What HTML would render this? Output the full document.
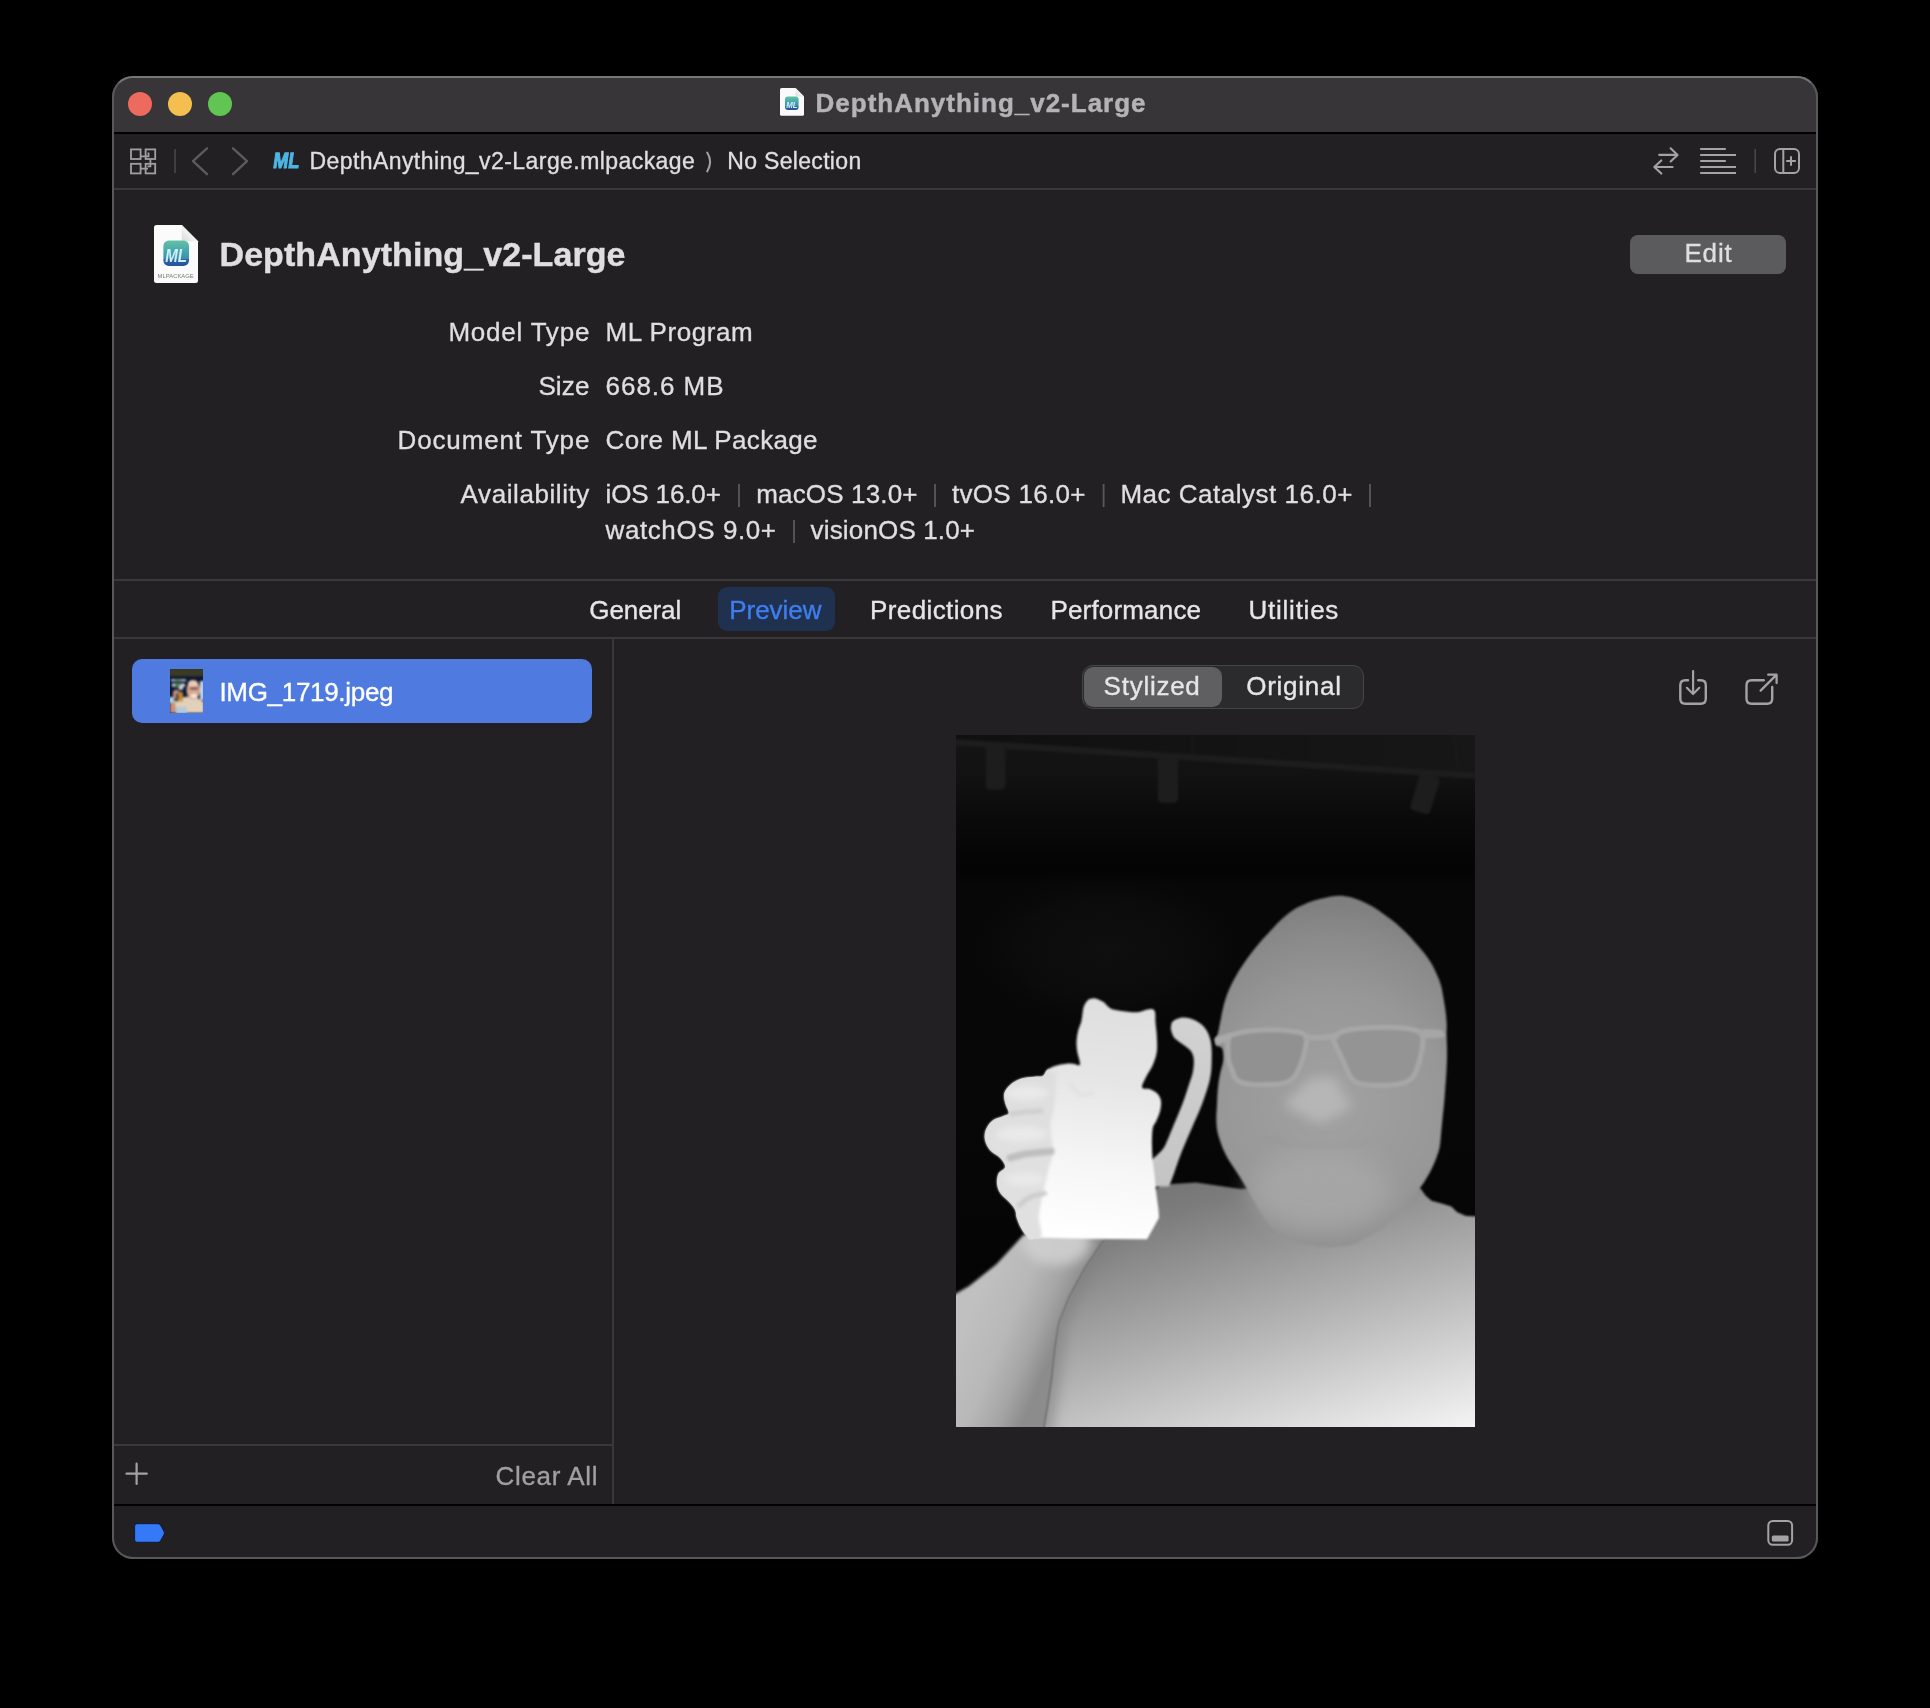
<!DOCTYPE html>
<html lang="en">
<head>
<meta charset="utf-8">
<title>DepthAnything_v2-Large</title>
<style>
*{box-sizing:border-box;margin:0;padding:0}
html,body{width:1930px;height:1708px;background:#000;overflow:hidden}
body{font-family:"Liberation Sans",sans-serif;color:#dfdee0;position:relative}
.a{position:absolute}
.t{position:absolute;white-space:nowrap;line-height:1}
#win{position:absolute;left:112px;top:76px;width:1706px;height:1483px;border-radius:21px;background:#222023;overflow:hidden}
#pg{position:absolute;left:-112px;top:-76px;width:1930px;height:1708px;will-change:transform}
#winborder{position:absolute;left:112px;top:76px;width:1706px;height:1483px;border-radius:21px;border:2px solid #59585b;border-top-color:#767578}
.hl{position:absolute;height:2px;background:#39383b}
.vl{position:absolute;width:2px;background:#39383b}
.dot{position:absolute;width:24px;height:24px;border-radius:50%;top:92px}
svg{position:absolute;overflow:visible}
</style>
</head>
<body>
<div id="win"><div id="pg">
  <!-- title bar -->
  <div class="a" style="left:112px;top:76px;width:1706px;height:56px;background:#373538"></div>
  <div class="a" style="left:112px;top:132px;width:1706px;height:2px;background:#000"></div>
  <div class="dot" style="left:128px;background:#ec6a5e"></div>
  <div class="dot" style="left:168px;background:#f4bf4f"></div>
  <div class="dot" style="left:208px;background:#61c554"></div>
  <!-- toolbar divider -->
  <div class="hl" style="left:112px;top:188px;width:1706px"></div>
  <!-- header / tabs dividers -->
  <div class="hl" style="left:112px;top:579px;width:1706px"></div>
  <div class="hl" style="left:112px;top:637px;width:1706px"></div>
  <!-- sidebar dividers -->
  <div class="vl" style="left:611.5px;top:639px;height:866px"></div>
  <div class="hl" style="left:112px;top:1444px;width:500px"></div>
  <!-- bottom bar -->
  <div class="a" style="left:112px;top:1504px;width:1706px;height:2px;background:#000"></div>
  <!-- Edit button -->
  <div class="a" style="left:1630px;top:234.5px;width:156px;height:39.5px;border-radius:8px;background:#5b5a5d"></div>
  <!-- selected tab pill -->
  <div class="a" style="left:718px;top:587px;width:117px;height:44px;border-radius:9px;background:#1f314f"></div>
  <!-- segmented control -->
  <div class="a" style="left:1082px;top:665px;width:282px;height:44px;border-radius:11px;background:#2b2a2d;border:1px solid #454447"></div>
  <div class="a" style="left:1083.7px;top:666.6px;width:138.3px;height:40.6px;border-radius:9.5px;background:#5f5e61"></div>
  <!-- sidebar selected row -->
  <div class="a" style="left:132px;top:659px;width:460px;height:64px;border-radius:10px;background:#4f7be0"></div>
  <!-- bottom bar items -->
<svg class="a" style="left:170px;top:669px" width="33" height="44" viewBox="0 0 33 44">
<defs><filter color-interpolation-filters="sRGB" id="tb" x="-20%" y="-20%" width="140%" height="140%"><feGaussianBlur stdDeviation="0.9"/></filter>
<clipPath id="tc"><rect x="0" y="0" width="33" height="44"/></clipPath></defs>
<g clip-path="url(#tc)">
<rect width="33" height="44" fill="#0b1730"/>
<g filter="url(#tb)">
<rect x="-1" y="-1" width="35" height="8.4" fill="#3b3a24"/>
<rect x="1" y="10.5" width="15" height="1.6" fill="#e8eef4"/>
<rect x="2" y="14.5" width="13" height="3.2" fill="#c9d3d6"/>
<rect x="5" y="11" width="6" height="9" fill="#2f5a36" opacity="0.7"/>
<rect x="30" y="12" width="4" height="19" fill="#c4d9f2"/>
<rect x="-1" y="28" width="5" height="6" fill="#a5d6e6"/>
<path d="M0 44V36Q4 31 9 30L14 28Q20 27 26 28L34 33V44Z" fill="#e3d0ba"/>
<path d="M0 44V35Q2 33 5 33L6 44Z" fill="#c98f7a"/>
<rect x="6" y="38" width="11" height="7" fill="#b4c9d6"/>
<ellipse cx="23.3" cy="21" rx="6.8" ry="9.6" fill="#d9a88f"/>
<ellipse cx="23" cy="14.5" rx="5" ry="3.5" fill="#ecc9b4"/>
<ellipse cx="24" cy="27" rx="3.5" ry="2.2" fill="#f3e4dc"/>
<ellipse cx="24" cy="19.5" rx="4.5" ry="1.2" fill="#7a5346"/>
<ellipse cx="11" cy="18.5" rx="2.3" ry="2.6" fill="#cfd0d6"/>
<rect x="3" y="21" width="6.5" height="9" rx="2.5" fill="#c98d7b"/>
<rect x="9.4" y="23" width="3.4" height="9.5" fill="#c98f2e"/>
<rect x="6.2" y="24.5" width="2" height="8" fill="#3c3a22"/>
</g>
</g>
</svg>

<svg class="a" style="left:956px;top:735px" width="519" height="692" viewBox="0 0 519 692">
<defs>
<clipPath id="dc"><rect x="0" y="0" width="519" height="692"/></clipPath>
<filter color-interpolation-filters="sRGB" id="b1" x="-5%" y="-5%" width="110%" height="110%"><feGaussianBlur stdDeviation="0.8"/></filter>
<filter color-interpolation-filters="sRGB" id="b2" x="-20%" y="-20%" width="140%" height="140%"><feGaussianBlur stdDeviation="1.6"/></filter>
<filter color-interpolation-filters="sRGB" id="b3" x="-20%" y="-20%" width="140%" height="140%"><feGaussianBlur stdDeviation="3"/></filter>
<filter color-interpolation-filters="sRGB" id="b6" x="-30%" y="-30%" width="160%" height="160%"><feGaussianBlur stdDeviation="6"/></filter>
<filter color-interpolation-filters="sRGB" id="b12" x="-40%" y="-40%" width="180%" height="180%"><feGaussianBlur stdDeviation="12"/></filter>
<linearGradient id="gbg" x1="0" y1="0" x2="0" y2="692" gradientUnits="userSpaceOnUse">
 <stop offset="0" stop-color="#151515"/><stop offset="0.06" stop-color="#121212"/><stop offset="0.11" stop-color="#0b0b0b"/><stop offset="0.18" stop-color="#050505"/><stop offset="0.195" stop-color="#040404"/><stop offset="0.22" stop-color="#070707"/><stop offset="0.5" stop-color="#070707"/><stop offset="1" stop-color="#030303"/></linearGradient>
<linearGradient id="gshirt" x1="200" y1="440" x2="297.6" y2="765.7" gradientUnits="userSpaceOnUse">
 <stop offset="0" stop-color="#747474"/><stop offset="0.12" stop-color="#7c7c7c"/><stop offset="0.5" stop-color="#b0b0b0"/><stop offset="1" stop-color="#f7f7f7"/></linearGradient>
<radialGradient id="ghead" cx="375" cy="370" r="200" gradientUnits="userSpaceOnUse">
 <stop offset="0" stop-color="#a2a2a2"/><stop offset="0.55" stop-color="#989898"/><stop offset="0.85" stop-color="#8a8a8a"/><stop offset="1" stop-color="#808080"/></radialGradient>
<linearGradient id="garm" x1="20" y1="560" x2="105" y2="596" gradientUnits="userSpaceOnUse">
 <stop offset="0" stop-color="#c0c0c0"/><stop offset="0.45" stop-color="#b8b8b8"/><stop offset="0.75" stop-color="#a6a6a6"/><stop offset="1" stop-color="#8c8c8c"/></linearGradient>
<linearGradient id="gcat" x1="170" y1="262" x2="140" y2="505" gradientUnits="userSpaceOnUse">
 <stop offset="0" stop-color="#dedede"/><stop offset="0.35" stop-color="#e6e6e6"/><stop offset="0.7" stop-color="#f6f6f6"/><stop offset="1" stop-color="#ffffff"/></linearGradient>
<radialGradient id="gshelf" cx="0.5" cy="0.5" r="0.5"><stop offset="0" stop-color="#0f0f0f"/><stop offset="0.6" stop-color="#0c0c0c" stop-opacity="0.8"/><stop offset="1" stop-color="#080808" stop-opacity="0"/></radialGradient>
<linearGradient id="ghand" x1="20" y1="0" x2="125" y2="0" gradientUnits="userSpaceOnUse"><stop offset="0" stop-color="#d6d6d6" stop-opacity="0.95"/><stop offset="0.45" stop-color="#dcdcdc" stop-opacity="0.7"/><stop offset="1" stop-color="#f0f0f0" stop-opacity="0"/></linearGradient>
<linearGradient id="gtop" x1="0" y1="0" x2="519" y2="0" gradientUnits="userSpaceOnUse"><stop offset="0" stop-color="#101010"/><stop offset="1" stop-color="#171717"/></linearGradient>
<linearGradient id="gtail" x1="230" y1="285" x2="200" y2="450" gradientUnits="userSpaceOnUse">
 <stop offset="0" stop-color="#d2d2d2"/><stop offset="1" stop-color="#c4c4c4"/></linearGradient>
</defs>
<clipPath id="shirtclip"><path d="M205.0 449.7L240.0 447.5L284.5 454.0L296.0 453.0L320.0 480.0L420.0 480.0L455.0 449.0L464.6 453.6L469.5 460.5L475.5 465.8L486.6 468.8L495.3 471.6L501.3 477.2L510.0 481.0L530.0 482.0L530.0 705.0L85.8 705.0L91.6 669.3L95.6 642.4L98.3 615.4L102.4 588.5L113.0 561.5L129.3 532.0L145.5 507.7L170.0 480.0Z"/></clipPath>
<clipPath id="armclip"><path d="M67.4 500.0L40.4 529.2L13.5 550.8L-10.0 564.5L-10.0 705.0L86.8 705.0L92.6 669.3L96.6 642.4L99.3 615.4L103.4 588.5L114.0 561.5L130.3 532.0L146.5 507.7L160.0 495.0Z"/></clipPath>
<clipPath id="catclip"><path d="M132.8 264.3C133.9 264.2 136.9 262.9 139.3 263.4C141.8 263.8 145.1 265.5 147.5 267.1C150.0 268.8 151.4 271.8 154.1 273.2C156.8 274.6 159.6 275.0 163.9 275.7C168.3 276.3 176.0 277.4 180.3 277.3C184.7 277.2 187.4 275.4 190.2 274.8C192.9 274.3 195.2 273.7 196.7 274.2C198.2 274.7 198.7 275.5 199.2 277.8C199.6 280.0 199.2 283.8 199.5 287.6C199.8 291.4 200.6 295.8 200.8 300.7C201.0 305.7 201.5 312.2 200.8 317.1C200.1 322.0 198.5 326.1 196.7 330.2C194.9 334.3 191.9 338.0 190.2 341.7C188.4 345.4 185.5 350.3 186.1 352.4C186.6 354.4 191.0 353.1 193.4 354.0C195.9 355.0 198.9 356.2 200.8 358.1C202.7 360.0 204.4 362.5 204.9 365.5C205.5 368.5 204.9 372.7 204.1 376.1C203.3 379.6 201.6 383.1 200.3 386.0C199.1 388.9 197.5 389.5 196.7 393.4C196.0 397.2 195.9 403.6 195.9 408.9C195.9 414.3 196.3 419.9 196.7 425.3C197.2 430.8 198.1 436.3 198.7 441.7C199.3 447.2 199.7 452.7 200.3 458.1C201.0 463.6 202.0 470.4 202.5 474.5C202.9 478.6 202.9 481.3 203.0 482.7L191.0 504.3L131.1 503.7L80.3 502.4L73.8 504.0C73.0 503.2 70.5 501.3 68.9 499.1C67.2 496.9 65.3 493.6 63.9 490.9C62.6 488.2 61.5 485.4 60.7 482.7C59.8 480.0 60.4 477.2 59.0 474.5C57.7 471.8 54.9 469.0 52.5 466.3C50.0 463.6 46.2 461.1 44.3 458.1C42.3 455.1 41.3 451.6 41.0 448.3C40.7 445.0 41.3 441.2 42.6 438.4C44.0 435.7 48.9 434.5 49.2 431.9C49.5 429.3 46.7 425.6 44.3 422.9C41.8 420.1 36.9 418.4 34.4 415.5C31.9 412.6 30.0 408.9 29.2 405.7C28.4 402.4 28.4 399.1 29.5 395.8C30.7 392.5 33.1 388.4 36.1 386.0C39.1 383.5 44.8 382.4 47.5 381.1C50.3 379.8 52.5 380.3 52.8 378.1C53.1 375.9 49.9 371.3 49.2 368.0C48.4 364.6 47.5 361.1 48.4 358.1C49.2 355.1 51.2 352.4 54.1 349.9C57.0 347.5 61.5 344.7 65.6 343.4C69.7 342.0 75.1 342.1 78.7 341.7C82.2 341.3 84.7 342.1 86.9 340.9C89.1 339.7 89.3 336.1 91.8 334.3C94.3 332.6 97.8 331.2 101.6 330.2C105.5 329.3 111.2 328.6 114.8 328.6C118.3 328.6 121.4 330.5 123.0 330.2C124.5 330.0 124.0 329.2 123.8 327.0C123.5 324.8 121.9 320.4 121.3 317.1C120.8 313.9 120.4 310.8 120.5 307.3C120.6 303.7 121.3 299.4 122.1 295.8C123.0 292.3 124.5 290.1 125.4 286.0C126.4 281.9 126.6 274.8 127.9 271.2C129.1 267.6 132.0 265.5 132.8 264.3Z"/></clipPath>
<g clip-path="url(#dc)">
<rect x="0" y="0" width="519" height="692" fill="url(#gbg)"/>
<ellipse cx="150" cy="215" rx="150" ry="85" fill="url(#gshelf)"/>
<g filter="url(#b1)">
<path d="M-2 -2 L521 -2 L521 37.6 L-2 3.9Z" fill="url(#gtop)"/>
<path d="M-2 3.9 L521 37.6 L521 44.1 L-2 10.4Z" fill="#1d1d1d"/>
<path d="M237.5 -1 L236 19" stroke="#1c1c1c" stroke-width="1.2" fill="none"/>
<path d="M498.5 -1 L502.5 38" stroke="#1c1c1c" stroke-width="1.2" fill="none"/>
<rect x="29.7" y="10" width="19.8" height="44.8" rx="4.5" fill="#1d1d1d"/>
<rect x="201.7" y="22" width="20.5" height="45.7" rx="4.5" fill="#1d1d1d"/>
<rect x="458" y="39" width="21" height="39" rx="4.5" fill="#1d1d1d" transform="rotate(17 468 60)"/>
</g>
<g filter="url(#b1)">
<path d="M205.0 449.7L240.0 447.5L284.5 454.0L296.0 453.0L320.0 480.0L420.0 480.0L455.0 449.0L464.6 453.6L469.5 460.5L475.5 465.8L486.6 468.8L495.3 471.6L501.3 477.2L510.0 481.0L530.0 482.0L530.0 705.0L85.8 705.0L91.6 669.3L95.6 642.4L98.3 615.4L102.4 588.5L113.0 561.5L129.3 532.0L145.5 507.7L170.0 480.0Z" fill="url(#gshirt)"/>
<path d="M150.0 500.0C146.8 505.3 136.8 521.8 131.0 532.0C125.2 542.2 119.5 552.1 115.0 561.5C110.5 570.9 106.5 579.5 104.0 588.5C101.5 597.5 101.2 606.4 100.0 615.4C98.8 624.4 98.2 633.4 97.0 642.4C95.8 651.4 94.5 659.7 93.0 669.3C91.5 678.9 88.8 694.9 88.0 700.0" fill="none" stroke="#7e7e7e" stroke-width="16" filter="url(#b6)" opacity="0.55" clip-path="url(#shirtclip)"/>
</g>
<g filter="url(#b1)">
<path d="M382.9 160.7C386.8 160.6 390.0 161.2 393.8 162.1C397.5 163.0 401.5 164.4 405.4 166.0C409.3 167.7 413.1 169.5 417.0 171.8C420.9 174.1 424.7 177.0 428.6 179.8C432.5 182.6 436.6 185.5 440.2 188.5C443.8 191.5 447.2 194.8 450.4 198.0C453.5 201.1 456.2 204.1 459.1 207.4C462.0 210.6 465.1 214.2 467.8 217.5C470.4 220.9 472.8 224.1 475.0 227.7C477.2 231.3 479.1 235.4 480.8 239.3C482.5 243.2 484.1 247.0 485.2 250.9C486.3 254.8 486.6 258.4 487.4 262.5C488.1 266.6 489.0 271.2 489.5 275.6C490.1 279.9 490.5 284.8 490.7 288.6C490.9 292.5 490.5 294.9 490.5 298.8C490.6 302.6 490.9 307.5 491.0 311.8C491.1 316.2 491.1 320.4 491.0 325.0C490.9 329.6 490.5 334.7 490.3 339.5C490.0 344.3 489.6 349.2 489.2 354.0C488.9 358.9 488.5 363.7 488.1 368.5C487.6 373.4 487.1 378.2 486.6 383.0C486.1 387.9 485.7 392.7 485.2 397.5C484.7 402.4 484.6 407.7 483.7 412.0C482.9 416.4 481.5 419.8 480.1 423.7C478.6 427.5 476.8 431.6 475.0 435.3C473.2 438.9 471.0 442.5 469.2 445.4C467.4 448.3 466.1 450.0 464.1 452.7C462.2 455.3 460.2 458.2 457.6 461.4C455.1 464.5 451.8 468.1 448.9 471.5C446.0 474.9 443.6 478.3 440.2 481.7C436.8 485.1 432.5 488.9 428.6 491.8C424.7 494.7 420.6 497.0 417.0 499.1C413.4 501.1 410.4 502.4 406.8 504.2C403.3 506.0 402.2 508.4 395.7 509.8C389.2 511.2 376.4 512.5 368.0 512.3C359.6 512.1 350.9 509.9 345.0 508.5C339.1 507.1 336.8 506.0 332.8 504.2C328.9 502.4 324.6 500.2 321.2 497.6C317.9 495.1 315.2 492.1 312.5 488.9C309.9 485.8 307.5 482.2 305.3 478.8C303.1 475.4 301.4 472.0 299.5 468.6C297.5 465.2 295.4 461.4 293.7 458.5C292.0 455.6 290.8 453.6 289.3 451.2C287.9 448.8 286.8 446.9 285.0 444.0C283.2 441.1 280.6 437.2 278.4 433.8C276.3 430.4 273.9 427.0 271.9 423.7C270.0 420.3 268.3 416.9 266.8 413.5C265.4 410.1 264.2 406.5 263.2 403.3C262.2 400.2 261.5 398.0 261.0 394.6C260.6 391.3 260.3 387.4 260.3 383.0C260.3 378.7 260.8 373.4 261.0 368.5C261.3 363.7 261.3 358.9 261.8 354.0C262.2 349.2 263.0 344.3 263.9 339.5C264.9 334.7 266.9 329.4 267.3 325.0C267.6 320.6 267.3 315.7 266.1 313.3C265.0 310.9 261.4 311.8 260.3 310.4C259.2 308.9 259.3 306.5 259.6 304.6C259.8 302.6 261.0 301.4 261.8 298.8C262.5 296.1 263.2 292.3 263.9 288.6C264.7 285.0 265.3 280.9 266.1 277.0C267.0 273.1 267.8 269.3 269.0 265.4C270.2 261.5 271.7 257.7 273.4 253.8C275.1 249.9 277.0 246.1 279.2 242.2C281.3 238.3 283.8 234.6 286.4 230.6C289.1 226.6 292.2 222.1 295.1 218.3C298.0 214.4 300.9 210.8 303.8 207.4C306.7 204.0 309.6 201.1 312.5 198.0C315.4 194.8 318.3 191.4 321.2 188.5C324.1 185.6 327.0 183.0 329.9 180.5C332.8 178.1 335.7 175.8 338.7 174.0C341.6 172.2 344.0 171.1 347.4 169.7C350.7 168.2 355.1 166.5 359.0 165.3C362.8 164.1 366.6 163.2 370.6 162.4C374.6 161.6 379.0 160.7 382.9 160.7Z" fill="url(#ghead)"/>
</g>
<g>
<path d="M354.6 343.9C360.9 341.7 374.2 341.7 379.3 343.9C384.3 346.0 382.7 353.0 385.1 356.9C387.5 360.8 392.6 364.4 393.8 367.1C395.0 369.7 395.5 370.2 392.3 372.9C389.2 375.5 379.8 380.5 374.9 383.0C370.1 385.6 367.4 388.3 363.3 388.1C359.2 387.9 354.9 384.2 350.3 381.9C345.7 379.6 339.3 376.7 335.7 374.3C332.2 372.0 328.3 370.7 329.2 367.8C330.2 364.9 337.3 360.9 341.6 356.9C345.8 352.9 348.3 346.0 354.6 343.9Z" fill="#b6b6b6" filter="url(#b6)" opacity="1"/>
<ellipse cx="365" cy="455" rx="70" ry="40" fill="#a8a8a8" filter="url(#b12)" opacity="0.8"/>
<path d="M308.2 403.3C313.7 404.5 331.2 408.9 341.6 410.3C351.9 411.8 360.9 412.1 370.6 412.0C380.2 412.0 392.6 410.7 399.6 409.9C406.6 409.0 410.5 407.5 412.6 407.0" fill="none" stroke="#939393" stroke-width="4" filter="url(#b3)" opacity="0.4"/>
<g filter="url(#b1)">
<path d="M272.2 303.4C272.7 299.2 271.2 301.2 275.5 299.9C279.8 298.6 290.4 296.4 298.0 295.6C305.6 294.8 313.9 294.7 321.2 295.0C328.6 295.3 337.4 296.3 342.3 297.3C347.1 298.4 349.0 299.0 350.3 301.4C351.5 303.8 350.2 307.9 349.5 311.8C348.9 315.8 347.5 321.2 346.3 325.0C345.2 328.8 344.0 331.3 342.4 334.4C340.9 337.5 339.6 341.2 336.9 343.6C334.2 345.9 331.6 347.3 326.3 348.4C321.0 349.4 311.6 349.8 305.3 349.8C299.0 349.8 292.8 349.3 288.6 348.4C284.4 347.4 282.5 346.6 280.3 344.3C278.2 342.0 277.1 337.6 275.8 334.4C274.6 331.2 273.2 330.2 272.6 325.0C272.0 319.8 271.7 307.6 272.2 303.4Z" fill="#919191" stroke="#a7a7a7" stroke-width="5" stroke-linejoin="round"/>
<path d="M377.8 302.0C379.7 299.2 385.6 296.8 391.6 295.3C397.6 293.7 405.5 293.1 414.1 292.7C422.7 292.3 435.2 292.2 443.1 292.7C451.0 293.2 457.7 294.3 461.7 295.9C465.6 297.5 466.0 299.7 466.8 302.4C467.5 305.1 466.8 308.1 466.3 311.8C465.8 315.6 464.8 320.8 463.7 325.0C462.6 329.2 461.4 333.6 459.8 336.9C458.2 340.2 457.0 342.7 454.1 344.7C451.2 346.8 447.8 348.2 442.4 349.1C436.9 350.0 427.9 350.4 421.3 350.2C414.8 350.1 407.5 349.5 403.2 348.4C398.9 347.2 397.6 345.7 395.5 343.4C393.5 341.1 392.3 337.5 390.9 334.4C389.4 331.4 388.6 328.8 386.8 325.0C385.1 321.2 381.9 315.7 380.4 311.8C378.9 308.0 376.0 304.7 377.8 302.0Z" fill="#949494" stroke="#a7a7a7" stroke-width="5" stroke-linejoin="round"/>
<path d="M348.1 299.1C350.5 298.3 358.1 300.0 363.3 299.9C368.5 299.9 376.2 298.0 379.3 298.8C382.3 299.6 384.1 303.5 381.4 304.6C378.8 305.7 368.8 305.3 363.3 305.3C357.9 305.3 351.3 305.6 348.8 304.6C346.3 303.5 345.7 299.8 348.1 299.1Z" fill="#a6a6a6"/>
<path d="M259.6 302.4C262.0 301.0 271.6 298.4 274.1 298.8C276.6 299.1 276.9 302.8 274.8 304.6C272.8 306.4 264.3 309.2 261.8 309.7C259.2 310.1 259.9 308.7 259.6 307.5C259.2 306.3 257.2 303.9 259.6 302.4Z" fill="#a9a9a9"/>
<path d="M466.3 294.4C469.2 293.2 481.5 294.4 485.2 295.2C488.9 295.9 488.1 297.6 488.4 298.8C488.6 300.0 490.1 301.8 486.6 302.4C483.2 303.0 471.2 303.7 467.8 302.4C464.4 301.1 463.4 295.6 466.3 294.4Z" fill="#a6a6a6"/>
</g>
</g>
<g filter="url(#b2)">
<path d="M67.4 500.0L40.4 529.2L13.5 550.8L-10.0 564.5L-10.0 705.0L86.8 705.0L92.6 669.3L96.6 642.4L99.3 615.4L103.4 588.5L114.0 561.5L130.3 532.0L146.5 507.7L160.0 495.0Z" fill="url(#garm)"/>
<ellipse cx="100" cy="508" rx="34" ry="22" fill="#cfcfcf" filter="url(#b6)" opacity="0.9" clip-path="url(#armclip)"/>
</g>
<g filter="url(#b1)">
<path d="M214.8 294.2C215.0 293.0 214.8 288.7 216.4 286.8C218.0 284.9 221.6 283.3 224.6 282.7C227.6 282.2 231.1 282.6 234.4 283.5C237.7 284.5 241.5 286.4 244.3 288.4C247.0 290.5 249.0 292.7 250.8 295.8C252.6 299.0 254.1 302.7 254.9 307.3C255.7 311.9 255.9 317.7 255.7 323.7C255.6 329.7 255.7 335.7 254.1 343.4C252.5 351.0 248.9 361.4 245.9 369.6C242.9 377.8 239.3 384.9 236.1 392.5C232.8 400.2 229.2 407.8 226.2 415.5C223.2 423.1 220.2 432.4 218.0 438.4C215.8 444.5 213.9 449.4 213.1 451.6L183.6 451.9C183.6 450.2 182.8 445.3 183.6 441.7C184.4 438.1 186.1 433.5 188.5 430.2C191.0 427.0 195.6 424.7 198.4 422.4C201.1 420.1 203.0 418.6 204.9 416.3C206.8 414.1 207.7 413.4 209.8 408.9C212.0 404.4 215.3 395.8 218.0 389.3C220.8 382.7 223.8 376.1 226.2 369.6C228.7 363.0 231.0 355.4 232.8 349.9C234.6 344.5 236.1 341.2 236.9 336.8C237.7 332.4 238.1 327.2 237.7 323.7C237.3 320.1 236.3 318.0 234.4 315.5C232.5 313.0 229.0 311.1 226.2 308.9C223.5 306.7 219.9 304.8 218.0 302.4C216.1 299.9 215.3 295.5 214.8 294.2Z" fill="url(#gtail)"/>
</g>
<g filter="url(#b1)">
<path d="M132.8 264.3C133.9 264.2 136.9 262.9 139.3 263.4C141.8 263.8 145.1 265.5 147.5 267.1C150.0 268.8 151.4 271.8 154.1 273.2C156.8 274.6 159.6 275.0 163.9 275.7C168.3 276.3 176.0 277.4 180.3 277.3C184.7 277.2 187.4 275.4 190.2 274.8C192.9 274.3 195.2 273.7 196.7 274.2C198.2 274.7 198.7 275.5 199.2 277.8C199.6 280.0 199.2 283.8 199.5 287.6C199.8 291.4 200.6 295.8 200.8 300.7C201.0 305.7 201.5 312.2 200.8 317.1C200.1 322.0 198.5 326.1 196.7 330.2C194.9 334.3 191.9 338.0 190.2 341.7C188.4 345.4 185.5 350.3 186.1 352.4C186.6 354.4 191.0 353.1 193.4 354.0C195.9 355.0 198.9 356.2 200.8 358.1C202.7 360.0 204.4 362.5 204.9 365.5C205.5 368.5 204.9 372.7 204.1 376.1C203.3 379.6 201.6 383.1 200.3 386.0C199.1 388.9 197.5 389.5 196.7 393.4C196.0 397.2 195.9 403.6 195.9 408.9C195.9 414.3 196.3 419.9 196.7 425.3C197.2 430.8 198.1 436.3 198.7 441.7C199.3 447.2 199.7 452.7 200.3 458.1C201.0 463.6 202.0 470.4 202.5 474.5C202.9 478.6 202.9 481.3 203.0 482.7L191.0 504.3L131.1 503.7L80.3 502.4L73.8 504.0C73.0 503.2 70.5 501.3 68.9 499.1C67.2 496.9 65.3 493.6 63.9 490.9C62.6 488.2 61.5 485.4 60.7 482.7C59.8 480.0 60.4 477.2 59.0 474.5C57.7 471.8 54.9 469.0 52.5 466.3C50.0 463.6 46.2 461.1 44.3 458.1C42.3 455.1 41.3 451.6 41.0 448.3C40.7 445.0 41.3 441.2 42.6 438.4C44.0 435.7 48.9 434.5 49.2 431.9C49.5 429.3 46.7 425.6 44.3 422.9C41.8 420.1 36.9 418.4 34.4 415.5C31.9 412.6 30.0 408.9 29.2 405.7C28.4 402.4 28.4 399.1 29.5 395.8C30.7 392.5 33.1 388.4 36.1 386.0C39.1 383.5 44.8 382.4 47.5 381.1C50.3 379.8 52.5 380.3 52.8 378.1C53.1 375.9 49.9 371.3 49.2 368.0C48.4 364.6 47.5 361.1 48.4 358.1C49.2 355.1 51.2 352.4 54.1 349.9C57.0 347.5 61.5 344.7 65.6 343.4C69.7 342.0 75.1 342.1 78.7 341.7C82.2 341.3 84.7 342.1 86.9 340.9C89.1 339.7 89.3 336.1 91.8 334.3C94.3 332.6 97.8 331.2 101.6 330.2C105.5 329.3 111.2 328.6 114.8 328.6C118.3 328.6 121.4 330.5 123.0 330.2C124.5 330.0 124.0 329.2 123.8 327.0C123.5 324.8 121.9 320.4 121.3 317.1C120.8 313.9 120.4 310.8 120.5 307.3C120.6 303.7 121.3 299.4 122.1 295.8C123.0 292.3 124.5 290.1 125.4 286.0C126.4 281.9 126.6 274.8 127.9 271.2C129.1 267.6 132.0 265.5 132.8 264.3Z" fill="url(#gcat)"/>
</g>
<g clip-path="url(#catclip)">
<path d="M16.4 327.0C29.0 298.1 77.9 331.1 91.8 334.3C105.7 337.6 98.9 340.8 100.0 346.6C101.1 352.5 99.3 361.9 98.4 369.6C97.4 377.2 94.5 384.9 94.3 392.5C94.0 400.2 97.5 408.1 97.0 415.5C96.6 422.9 93.5 429.7 91.8 436.8C90.1 443.9 88.4 450.7 86.9 458.1C85.4 465.5 83.9 472.9 82.8 481.1C81.7 489.3 91.4 502.9 80.3 507.3C69.3 511.7 27.0 537.3 16.4 507.3C5.7 477.2 3.8 355.8 16.4 327.0Z" fill="#dedede" opacity="0.92" filter="url(#b2)"/>
<g filter="url(#b3)" opacity="0.8">
<ellipse cx="70.5" cy="358.1" rx="22" ry="7" fill="#ececec"/>
<ellipse cx="65.6" cy="399.1" rx="26" ry="8" fill="#ececec"/>
<ellipse cx="68.9" cy="444.2" rx="20" ry="7" fill="#ebebeb"/>
</g>
<g filter="url(#b2)">
<path d="M54.1 422.9C56.8 422.2 63.7 419.9 70.5 418.8C77.3 417.7 91.0 416.7 95.1 416.3" stroke="#bebebe" stroke-width="7" fill="none" stroke-linecap="round"/>
<path d="M54.9 379.1C57.2 378.7 63.8 377.5 68.9 377.0C73.9 376.5 82.5 376.3 85.2 376.1" stroke="#cfcfcf" stroke-width="5" fill="none" stroke-linecap="round"/>
<path d="M63.1 470.4C64.9 469.0 69.5 464.3 73.8 462.2C78.0 460.2 86.1 458.8 88.5 458.1" stroke="#cdcdcd" stroke-width="5" fill="none" stroke-linecap="round"/>
<path d="M114.8 349.9C116.4 351.6 121.0 358.4 124.6 359.8C128.1 361.1 134.2 358.4 136.1 358.1" stroke="#dcdcdc" stroke-width="3" fill="none" stroke-linecap="round" opacity="0.6"/>
</g>
</g>
</g></svg>
<svg class="a" style="left:0;top:0" width="1930" height="1708" viewBox="0 0 1930 1708" fill="none">
<defs>
<linearGradient id="mlsq" x1="0" y1="0" x2="0" y2="1">
 <stop offset="0" stop-color="#62c3a6"/><stop offset="0.45" stop-color="#46a3ab"/><stop offset="0.72" stop-color="#3a8fad"/><stop offset="0.74" stop-color="#2f66a4"/><stop offset="1" stop-color="#27509a"/></linearGradient>
<linearGradient id="fold" x1="0" y1="1" x2="1" y2="0">
 <stop offset="0" stop-color="#d9d9d9"/><stop offset="0.5" stop-color="#f4f4f4"/><stop offset="1" stop-color="#ffffff"/></linearGradient>
<filter color-interpolation-filters="sRGB" id="ib" x="-20%" y="-20%" width="140%" height="140%"><feGaussianBlur stdDeviation="0.5"/></filter>
</defs>

<!-- related-items grid icon -->
<g stroke="#a09fa2" stroke-width="1.8">
 <rect x="131" y="149.4" width="9.6" height="9.6"/>
 <rect x="145.6" y="149.4" width="9.6" height="9.6"/>
 <rect x="131" y="163.8" width="9.6" height="9.6"/>
 <rect x="145.6" y="163.8" width="9.6" height="9.6"/>
 <path d="M140.6 156.4H148.5V152.4M150.4 159V166.3H147.5M140.6 168.6H148"/>
</g>
<!-- separators -->
<path d="M175 149V173" stroke="#48474a" stroke-width="1.6"/>
<path d="M1755.2 149V173" stroke="#48474a" stroke-width="1.6"/>
<!-- back / forward chevrons -->
<path d="M207 148.3L193 161.2L207 174.2" stroke="#5b5a5d" stroke-width="2.4" stroke-linecap="round" stroke-linejoin="round"/>
<path d="M233 148.3L247 161.2L233 174.2" stroke="#5b5a5d" stroke-width="2.4" stroke-linecap="round" stroke-linejoin="round"/>
<!-- breadcrumb chevron -->
<path d="M707.2 152.5Q713 161.5 707.2 171.5" stroke="#a3a2a5" stroke-width="2" stroke-linecap="round"/>
<!-- swap arrows -->
<g stroke="#a3a2a5" stroke-width="2.1" stroke-linecap="round" stroke-linejoin="round">
 <path d="M1659.3 154.9H1677.4M1670.6 148.3L1677.6 154.9L1670.6 161.5"/>
 <path d="M1672.6 167H1654.5M1661.3 160.4L1654.3 167L1661.3 173.6"/>
</g>
<!-- text lines icon -->
<g stroke="#a3a2a5" stroke-width="2">
 <path d="M1700.2 149H1725.8M1700.2 155H1736M1700.2 161H1725.8M1700.2 167H1736M1700.2 173H1736"/>
</g>
<!-- add editor icon -->
<g stroke="#a3a2a5" stroke-width="2">
 <rect x="1775" y="149" width="24" height="24" rx="5"/>
 <path d="M1783.3 149V173M1786.2 161H1795.8M1791 156.2V165.8"/>
</g>
<!-- download icon -->
<g stroke="#a3a2a5" stroke-width="2.4" stroke-linecap="round" stroke-linejoin="round">
 <path d="M1688 680.2H1685.3Q1680.3 680.2 1680.3 685.2V698.7Q1680.3 703.7 1685.3 703.7H1700.8Q1705.8 703.7 1705.8 698.7V685.2Q1705.8 680.2 1700.8 680.2H1698.2"/>
 <path d="M1693.1 671V693.6M1686.9 687.8L1693.1 694L1699.3 687.8" stroke-width="2.2"/>
</g>
<!-- external / open icon -->
<g stroke="#a3a2a5" stroke-width="2.4" stroke-linecap="round" stroke-linejoin="round">
 <path d="M1763.8 680.2H1751.5Q1746.5 680.2 1746.5 685.2V698.7Q1746.5 703.7 1751.5 703.7H1767.2Q1772.2 703.7 1772.2 698.7V687"/>
 <path d="M1760.6 690.6L1776.4 674.9M1768.2 674.7H1776.6V683.1" stroke-width="2.3"/>
</g>
<!-- plus -->
<path d="M126.5 1473.7H146.8M136.6 1463.6V1483.9" stroke="#a3a2a5" stroke-width="2.2" stroke-linecap="round"/>
<!-- debug area toggle -->
<rect x="1768.3" y="1521" width="23.8" height="23.8" rx="4.5" stroke="#a3a2a5" stroke-width="2"/>
<rect x="1771.8" y="1535.6" width="16.8" height="5.8" rx="1.5" fill="#a3a2a5"/>
<!-- breakpoint tag -->
<path d="M137 1523.7H157.8Q159.6 1523.7 160.6 1525.2L164 1531.4Q164.9 1533 164 1534.6L160.6 1540.8Q159.6 1542.3 157.8 1542.3H137Q134.6 1542.3 134.6 1539.9V1526.1Q134.6 1523.7 137 1523.7Z" fill="#3579f6" stroke="#0b1c3f" stroke-width="1"/>
<!-- availability pipes -->
<g stroke="#59585b" stroke-width="1.8">
 <path d="M739 484V507M935 484V507M1103.6 484V507M1370 484V507M794 520V543"/>
</g>

<!-- ML glyph icon in breadcrumb (drawn with real text) -->
<g transform="translate(272.5 168.2) skewX(-8)" font-family="'Liberation Sans',sans-serif" font-weight="700" fill="#4db5e4">
 <text x="0" y="0" font-size="22" textLength="26" lengthAdjust="spacingAndGlyphs" stroke="#4db5e4" stroke-width="1.2">ML</text>
</g>

<!-- title-bar document icon -->
<g>
 <path d="M781.6 88H795.5L804 96.6V114.2Q804 115.8 802.4 115.8H781.6Q780 115.8 780 114.2V89.6Q780 88 781.6 88Z" fill="#fafafa"/>
 <path d="M795.5 88L804 96.6H797Q795.5 96.6 795.5 95Z" fill="url(#fold)"/>
 <rect x="785" y="96.5" width="13.6" height="13.6" rx="3" fill="url(#mlsq)"/>
 <text x="786.2" y="107.6" font-family="'Liberation Sans',sans-serif" font-weight="700" font-style="italic" font-size="9.5" textLength="11.4" lengthAdjust="spacingAndGlyphs" fill="#cdeff6">ML</text>
</g>

<!-- header document icon -->
<g>
 <path d="M156.5 225H181.8L198 241.2V280.6Q198 283.1 195.5 283.1H156.5Q154 283.1 154 280.6V227.5Q154 225 156.5 225Z" fill="#fbfbfb"/>
 <path d="M181.8 225L198 241.2H184.6Q181.8 241.2 181.8 238.4Z" fill="url(#fold)"/>
 <rect x="163.4" y="240.5" width="25.6" height="25.4" rx="5.5" fill="url(#mlsq)"/>
 <text x="165.2" y="261.6" font-family="'Liberation Sans',sans-serif" font-weight="700" font-style="italic" font-size="19" textLength="21.8" lengthAdjust="spacingAndGlyphs" fill="#cdeff6">ML</text>
 <text x="157.6" y="277.6" font-family="'Liberation Sans',sans-serif" font-size="6.2" textLength="36.2" lengthAdjust="spacingAndGlyphs" fill="#7a7a7a">MLPACKAGE</text>
</g>
</svg>

<span class="t" style="left:815.6px;top:90.0px;font-size:26px;color:#b4b3b6;letter-spacing:0.990px;font-weight:700;-webkit-text-stroke:0.45px currentColor;">DepthAnything_v2-Large</span>
<span class="t" style="left:309.4px;top:149.7px;font-size:23px;color:#dfdee0;letter-spacing:0.431px;-webkit-text-stroke:0.35px currentColor;">DepthAnything_v2-Large.mlpackage</span>
<span class="t" style="left:727.2px;top:149.7px;font-size:23px;color:#dfdee0;letter-spacing:0.328px;-webkit-text-stroke:0.35px currentColor;">No Selection</span>
<span class="t" style="left:219.5px;top:236.7px;font-size:34px;color:#dfdee0;letter-spacing:0.080px;font-weight:700;-webkit-text-stroke:0.45px currentColor;">DepthAnything_v2-Large</span>
<span class="t" style="left:1684.4px;top:240.4px;font-size:26px;color:#dfdee0;letter-spacing:0.879px;-webkit-text-stroke:0.35px currentColor;">Edit</span>
<span class="t" style="left:448.4px;top:318.6px;font-size:26px;color:#dfdee0;letter-spacing:0.779px;-webkit-text-stroke:0.35px currentColor;">Model Type</span>
<span class="t" style="left:538.4px;top:372.6px;font-size:26px;color:#dfdee0;letter-spacing:0.124px;-webkit-text-stroke:0.35px currentColor;">Size</span>
<span class="t" style="left:397.6px;top:426.6px;font-size:26px;color:#dfdee0;letter-spacing:0.844px;-webkit-text-stroke:0.35px currentColor;">Document Type</span>
<span class="t" style="left:460.6px;top:480.6px;font-size:26px;color:#dfdee0;letter-spacing:0.581px;-webkit-text-stroke:0.35px currentColor;">Availability</span>
<span class="t" style="left:605.6px;top:318.6px;font-size:26px;color:#dfdee0;letter-spacing:0.541px;-webkit-text-stroke:0.35px currentColor;">ML Program</span>
<span class="t" style="left:605.6px;top:372.6px;font-size:26px;color:#dfdee0;letter-spacing:0.950px;-webkit-text-stroke:0.35px currentColor;">668.6 MB</span>
<span class="t" style="left:605.6px;top:426.6px;font-size:26px;color:#dfdee0;letter-spacing:0.344px;-webkit-text-stroke:0.35px currentColor;">Core ML Package</span>
<span class="t" style="left:605.6px;top:480.6px;font-size:26px;color:#dfdee0;letter-spacing:-0.139px;-webkit-text-stroke:0.35px currentColor;">iOS 16.0+</span>
<span class="t" style="left:756.2px;top:480.6px;font-size:26px;color:#dfdee0;letter-spacing:0.165px;-webkit-text-stroke:0.35px currentColor;">macOS 13.0+</span>
<span class="t" style="left:952.0px;top:480.6px;font-size:26px;color:#dfdee0;letter-spacing:0.304px;-webkit-text-stroke:0.35px currentColor;">tvOS 16.0+</span>
<span class="t" style="left:1120.4px;top:480.6px;font-size:26px;color:#dfdee0;letter-spacing:0.510px;-webkit-text-stroke:0.35px currentColor;">Mac Catalyst 16.0+</span>
<span class="t" style="left:605.6px;top:516.6px;font-size:26px;color:#dfdee0;letter-spacing:0.573px;-webkit-text-stroke:0.35px currentColor;">watchOS 9.0+</span>
<span class="t" style="left:810.6px;top:516.6px;font-size:26px;color:#dfdee0;letter-spacing:0.155px;-webkit-text-stroke:0.35px currentColor;">visionOS 1.0+</span>
<span class="t" style="left:589.3px;top:596.8px;font-size:26px;color:#e6e5e7;letter-spacing:-0.092px;-webkit-text-stroke:0.35px currentColor;">General</span>
<span class="t" style="left:729.2px;top:596.8px;font-size:26px;color:#3e7ef0;letter-spacing:-0.022px;-webkit-text-stroke:0.35px currentColor;">Preview</span>
<span class="t" style="left:870.1px;top:596.8px;font-size:26px;color:#e6e5e7;letter-spacing:0.382px;-webkit-text-stroke:0.35px currentColor;">Predictions</span>
<span class="t" style="left:1050.4px;top:596.8px;font-size:26px;color:#e6e5e7;letter-spacing:0.181px;-webkit-text-stroke:0.35px currentColor;">Performance</span>
<span class="t" style="left:1248.6px;top:596.8px;font-size:26px;color:#e6e5e7;letter-spacing:0.744px;-webkit-text-stroke:0.35px currentColor;">Utilities</span>
<span class="t" style="left:1103.6px;top:673.0px;font-size:26px;color:#e6e5e7;letter-spacing:0.743px;-webkit-text-stroke:0.35px currentColor;">Stylized</span>
<span class="t" style="left:1246.3px;top:673.0px;font-size:26px;color:#e6e5e7;letter-spacing:0.722px;-webkit-text-stroke:0.35px currentColor;">Original</span>
<span class="t" style="left:219.4px;top:678.7px;font-size:26px;color:#ffffff;letter-spacing:-0.304px;-webkit-text-stroke:0.35px currentColor;">IMG_1719.jpeg</span>
<span class="t" style="left:495.6px;top:1462.5px;font-size:26px;color:#a09fa2;letter-spacing:0.640px;-webkit-text-stroke:0.35px currentColor;">Clear All</span>
</div></div>
<div id="winborder"></div>
</body>
</html>
